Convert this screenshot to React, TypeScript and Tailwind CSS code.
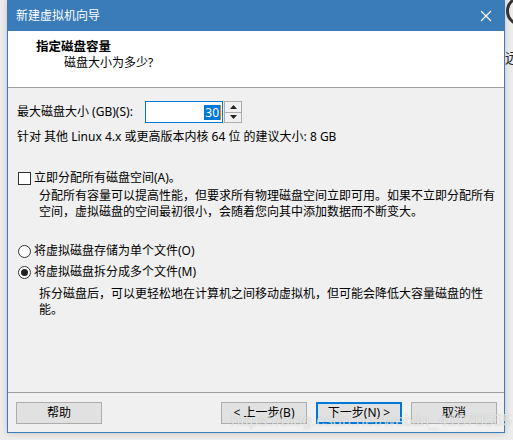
import React from "react";

const font = { fontFamily: '"Noto Sans", "Noto Sans CJK SC", sans-serif' };

function Button({ label, primary }: { label: string; primary?: boolean }) {
  return (
    <div
      className={
        "w-[86px] h-[22px] flex items-center justify-center bg-[#e1e1e1] text-[12px] text-black leading-none " +
        (primary ? "border-2 border-[#0078d7]" : "border border-[#adadad]")
      }
    >
      {label}
    </div>
  );
}

export default function App() {
  return (
    <div
      className="relative w-[513px] h-[440px] overflow-hidden bg-[#ececec] text-[12px] text-black"
      style={font}
    >
      {/* right side background clutter */}
      <div className="absolute left-[506px] top-[-4px] w-[30px] h-[30px] rounded-full border-[3px] border-[#333]" />
      <div className="absolute left-[505px] top-[50px] text-[14px] leading-[16px] text-[#222]">远</div>

      <div className="flex pl-[7px]">
        {/* window */}
        <div className="w-[498px] h-[433px] flex flex-col border border-t-0 border-[#3a7bba] bg-[#f0f0f0] shadow-[0_0_6px_rgba(0,0,0,0.18)]">
          {/* title bar */}
          <div className="h-[31px] bg-[#3a7bba] flex items-center justify-between pl-[8px] pr-[10px] text-white text-[12px]">
            <span className="leading-none">新建虚拟机向导</span>
            <svg width="12" height="12" viewBox="0 0 12 12" className="mr-[2px]">
              <path d="M1 1 L11 11 M11 1 L1 11" stroke="white" strokeWidth="1.2" />
            </svg>
          </div>
          {/* header */}
          <div className="h-[56px] bg-white flex flex-col pt-[8px] leading-[16px]">
            <div className="pl-[28px] font-bold text-[12.5px]">指定磁盘容量</div>
            <div className="pl-[56px]">磁盘大小为多少?</div>
          </div>
          <div className="h-px bg-[#a0a0a0]" />
          {/* body */}
          <div className="flex-1 flex flex-col pl-[9px] leading-[16px]">
            <div className="mt-[13px] h-[22px] flex items-center">
              <span className="w-[128px]">最大磁盘大小 (GB)(S):</span>
              <div className="w-[78px] h-[22px] border border-[#0078d7] bg-white flex items-center justify-end pr-[1px]">
                <span className="bg-[#0078d7] text-white leading-[15px] px-[1px]">30</span>
                <span className="w-px h-[15px] bg-[#f08000]" />
              </div>
              <div className="ml-[1px] w-[18px] h-[22px] border border-[#adadad] bg-[#f0f0f0] flex flex-col">
                <div className="flex-1 flex items-center justify-center border-b border-[#adadad]">
                  <svg width="7" height="4" viewBox="0 0 7 4"><path d="M0 4 L3.5 0 L7 4 Z" fill="#222" /></svg>
                </div>
                <div className="flex-1 flex items-center justify-center">
                  <svg width="7" height="4" viewBox="0 0 7 4"><path d="M0 0 L3.5 4 L7 0 Z" fill="#222" /></svg>
                </div>
              </div>
            </div>
            <div className="mt-[6px] whitespace-nowrap">针对 其他 Linux 4.x 或更高版本内核 64 位 的建议大小: 8 GB</div>

            <div className="mt-[25px] flex items-center">
              <div className="ml-[1px] w-[13px] h-[13px] border border-[#333] bg-white" />
              <span className="ml-[3px]">立即分配所有磁盘空间(A)。</span>
            </div>
            <div className="mt-[2px] pl-[22px] whitespace-nowrap">
              <div>分配所有容量可以提高性能，但要求所有物理磁盘空间立即可用。如果不立即分配所有</div>
              <div>空间，虚拟磁盘的空间最初很小，会随着您向其中添加数据而不断变大。</div>
            </div>

            <div className="mt-[23px] flex items-center">
              <div className="ml-[1px] w-[13px] h-[13px] rounded-full border border-[#333] bg-white" />
              <span className="ml-[3px]">将虚拟磁盘存储为单个文件(O)</span>
            </div>
            <div className="mt-[5px] flex items-center">
              <div className="ml-[1px] w-[13px] h-[13px] rounded-full border border-[#333] bg-white flex items-center justify-center">
                <div className="w-[7px] h-[7px] rounded-full bg-[#222]" />
              </div>
              <span className="ml-[3px]">将虚拟磁盘拆分成多个文件(M)</span>
            </div>
            <div className="mt-[6px] pl-[22px] whitespace-nowrap">
              <div>拆分磁盘后，可以更轻松地在计算机之间移动虚拟机，但可能会降低大容量磁盘的性</div>
              <div>能。</div>
            </div>
          </div>
          <div className="h-px bg-[#a0a0a0]" />
          {/* footer */}
          <div className="h-[39px] flex pt-[9px] pl-[8px] pr-[7px]">
            <Button label="帮助" />
            <div className="flex-1" />
            <div className="flex gap-[9px]">
              <Button label="< 上一步(B)" />
              <Button label="下一步(N) >" primary />
              <Button label="取消" />
            </div>
          </div>
        </div>
      </div>

      {/* watermark */}
      <div
        className="absolute left-[231px] top-[410px] text-[16.5px] leading-[20px] text-white/70 whitespace-nowrap [text-shadow:0_0_1px_rgba(0,0,0,0.25)]"
        style={{ fontFamily: '"Liberation Sans", Arial, sans-serif' }}
      >
        https://blog.csdn.net/weixin_41870565
      </div>
    </div>
  );
}
